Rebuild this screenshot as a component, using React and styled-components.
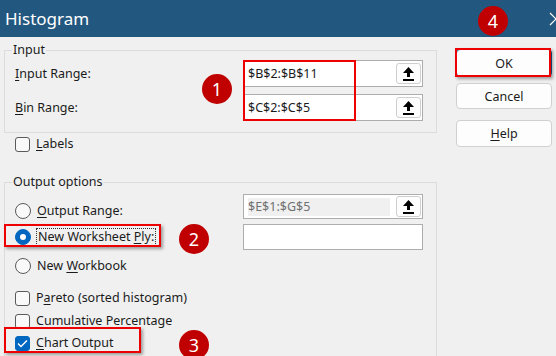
import React from 'react';
import styled, { createGlobalStyle } from 'styled-components';

const GlobalStyle = createGlobalStyle`
  html, body { margin: 0; padding: 0; background: #f0f0f0; }
  body {
    font-family: "Noto Sans", "Open Sans", sans-serif;
    font-size: 12.5px;
    color: #1b1b1b;
  }
`;

const Window = styled.div`
  position: relative;
  width: 556px;
  height: 356px;
  overflow: hidden;
  background: #f0f0f0;
`;

const TitleBar = styled.div`
  height: 37px;
  box-sizing: border-box;
  background: #22587f;
  color: #fff;
  display: flex;
  align-items: center;
  justify-content: space-between;
  padding-left: 5px;
  font-size: 17px;
`;

const CloseIcon = styled.svg`
  margin-right: -7px;
`;

const Body = styled.div`
  display: flex;
  align-items: flex-start;
`;

const Main = styled.div`
  width: 433px;
  margin-left: 4px;
`;

const Side = styled.div`
  display: flex;
  flex-direction: column;
  width: 96px;
  margin-left: 19px;
  padding-top: 12px;
`;

const Button = styled.button`
  height: ${p => p.$h}px;
  margin-bottom: ${p => p.$after || 0}px;
  box-sizing: border-box;
  background: #fdfdfd;
  border: 1px solid ${p => (p.$default ? '#1f5f99' : '#d0d0d0')};
  border-radius: 4px;
  font: inherit;
  font-size: 12.5px;
  color: #1b1b1b;
  padding: 0;
`;

const Group = styled.fieldset`
  margin: ${p => p.$top}px 0 0;
  padding: 1px 0 ${p => p.$bottom}px 7px;
  border: 1px solid #dcdcdc;
  min-width: 0;
`;

const Caption = styled.legend`
  padding: 0 1px;
  line-height: 18px;
  font-size: 12.5px;
`;

const InputGrid = styled.div`
  display: grid;
  grid-template-columns: 228px 180px;
  row-gap: 7px;
  align-items: center;
  padding-left: 3px;
`;

const Label = styled.span`
  line-height: 16px;
`;

const Key = styled.span`
  text-decoration: underline;
  text-underline-offset: 2px;
`;

const Field = styled.div`
  display: flex;
  align-items: center;
  justify-content: space-between;
  height: ${p => p.$h}px;
  margin-top: ${p => p.$top || 0}px;
  box-sizing: border-box;
  border: 1px solid #adadad;
  background: #fff;
  padding: 0 1px 0 4px;
`;

const FieldText = styled.span`
  line-height: 18px;
  color: ${p => (p.$disabled ? '#707070' : '#1b1b1b')};
  background: ${p => (p.$disabled ? '#f0f0f0' : 'transparent')};
  width: ${p => (p.$disabled ? '142px' : 'auto')};
`;

const PickButton = styled.span`
  display: flex;
  align-items: center;
  justify-content: center;
  width: 25px;
  height: 21px;
  box-sizing: border-box;
  background: #fdfdfd;
  border: 1px solid #cfcfcf;
  border-radius: 3px;
`;

const Row = styled.div`
  display: flex;
  align-items: center;
  gap: 6px;
  height: ${p => p.$h || 22}px;
  margin-top: ${p => p.$top || 0}px;
  padding-left: ${p => p.$left || 0}px;
`;

const Box = styled.span`
  display: inline-flex;
  align-items: center;
  justify-content: center;
  width: 15px;
  height: 15px;
  box-sizing: border-box;
  border-radius: 3px;
  border: 1px solid ${p => (p.$checked ? '#0067c0' : '#5a5a5a')};
  background: ${p => (p.$checked ? '#0067c0' : '#f9f9f9')};
`;

const Radio = styled.span`
  display: inline-flex;
  align-items: center;
  justify-content: center;
  width: 16px;
  height: 16px;
  box-sizing: border-box;
  border-radius: 50%;
  border: 1px solid ${p => (p.$checked ? '#0067c0' : '#5a5a5a')};
  background: ${p => (p.$checked ? '#0067c0' : '#f9f9f9')};
  &::after {
    content: '';
    display: ${p => (p.$checked ? 'block' : 'none')};
    width: 6px;
    height: 6px;
    border-radius: 50%;
    background: #fff;
  }
`;

const Focus = styled.span`
  outline: 1px dotted #333;
  outline-offset: 0;
  padding: 0 1px;
  line-height: 16px;
`;

const OutputGrid = styled.div`
  display: grid;
  grid-template-columns: 231px 180px;
  align-items: start;
`;

const Options = styled.div`
  display: flex;
  flex-direction: column;
  padding-top: 8px;
  padding-left: 3px;
`;

const Fields = styled.div`
  display: flex;
  flex-direction: column;
  padding-top: 2px;
`;

const Highlight = styled.div`
  position: absolute;
  left: ${p => p.$x}px;
  top: ${p => p.$y}px;
  width: ${p => p.$w}px;
  height: ${p => p.$h}px;
  box-sizing: border-box;
  border: 2px solid #ee0000;
  box-shadow: ${p => (p.$shadow ? '2px 2px 3px rgba(0,0,0,0.35)' : 'none')};
  pointer-events: none;
`;

const Badge = styled.div`
  position: absolute;
  left: ${p => p.$x}px;
  top: ${p => p.$y}px;
  width: 30px;
  height: 30px;
  border-radius: 50%;
  background: #c00000;
  color: #fff;
  font-size: 18px;
  line-height: 30px;
  text-align: center;
`;

const PickIcon = () => (
  <svg width="11" height="14" viewBox="0 0 11 14">
    <path d="M5.5 0 L11 6 L7 6 L7 10 L4 10 L4 6 L0 6 Z" fill="#000" />
    <rect x="0" y="12" width="11" height="2" fill="#000" />
  </svg>
);

const Check = () => (
  <svg width="11" height="9" viewBox="0 0 11 9">
    <path d="M1 4.5 L4 7.5 L10 1.5" stroke="#fff" strokeWidth="1.4" fill="none" />
  </svg>
);

export default function App() {
  return (
    <Window>
      <GlobalStyle />
      <TitleBar>
        <span>Histogram</span>
        <CloseIcon width="14" height="14" viewBox="0 0 14 14">
          <path d="M1 1 L13 13 M13 1 L1 13" stroke="#fff" strokeWidth="1.2" />
        </CloseIcon>
      </TitleBar>
      <Body>
        <Main>
          <Group $top={4} $bottom={11}>
            <Caption>Input</Caption>
            <InputGrid>
              <Label><Key>I</Key>nput Range:</Label>
              <Field $h={27}>
                <FieldText>$B$2:$B$11</FieldText>
                <PickButton><PickIcon /></PickButton>
              </Field>
              <Label><Key>B</Key>in Range:</Label>
              <Field $h={27}>
                <FieldText>$C$2:$C$5</FieldText>
                <PickButton><PickIcon /></PickButton>
              </Field>
            </InputGrid>
          </Group>
          <Row $h={16} $top={3} $left={11}>
            <Box />
            <Label><Key>L</Key>abels</Label>
          </Row>
          <Group $top={21} $bottom={20}>
            <Caption>Output options</Caption>
            <OutputGrid>
              <Options>
                <Row>
                  <Radio />
                  <Label><Key>O</Key>utput Range:</Label>
                </Row>
                <Row $top={4}>
                  <Radio $checked />
                  <Focus>New Worksheet <Key>P</Key>ly:</Focus>
                </Row>
                <Row $top={7}>
                  <Radio />
                  <Label>New <Key>W</Key>orkbook</Label>
                </Row>
                <Row $top={10}>
                  <Box />
                  <Label>P<Key>a</Key>reto (sorted histogram)</Label>
                </Row>
                <Row $top={1}>
                  <Box />
                  <Label>Cumulative Percentage</Label>
                </Row>
                <Row>
                  <Box $checked><Check /></Box>
                  <Label><Key>C</Key>hart Output</Label>
                </Row>
              </Options>
              <Fields>
                <Field $h={25}>
                  <FieldText $disabled>$E$1:$G$5</FieldText>
                  <PickButton><PickIcon /></PickButton>
                </Field>
                <Field $h={26} $top={5} />
              </Fields>
            </OutputGrid>
          </Group>
        </Main>
        <Side>
          <Button $h={28} $after={6} $default>OK</Button>
          <Button $h={26} $after={11}>Cancel</Button>
          <Button $h={27}><Key>H</Key>elp</Button>
        </Side>
      </Body>

      <Highlight $x={243} $y={60} $w={113} $h={61} />
      <Highlight $x={4} $y={224} $w={157} $h={23} $shadow />
      <Highlight $x={4} $y={327} $w={137} $h={26} $shadow />
      <Highlight $x={455} $y={48} $w={96} $h={29} $shadow />

      <Badge $x={202} $y={74}>1</Badge>
      <Badge $x={179} $y={224}>2</Badge>
      <Badge $x={179} $y={330}>3</Badge>
      <Badge $x={478} $y={6}>4</Badge>
    </Window>
  );
}
